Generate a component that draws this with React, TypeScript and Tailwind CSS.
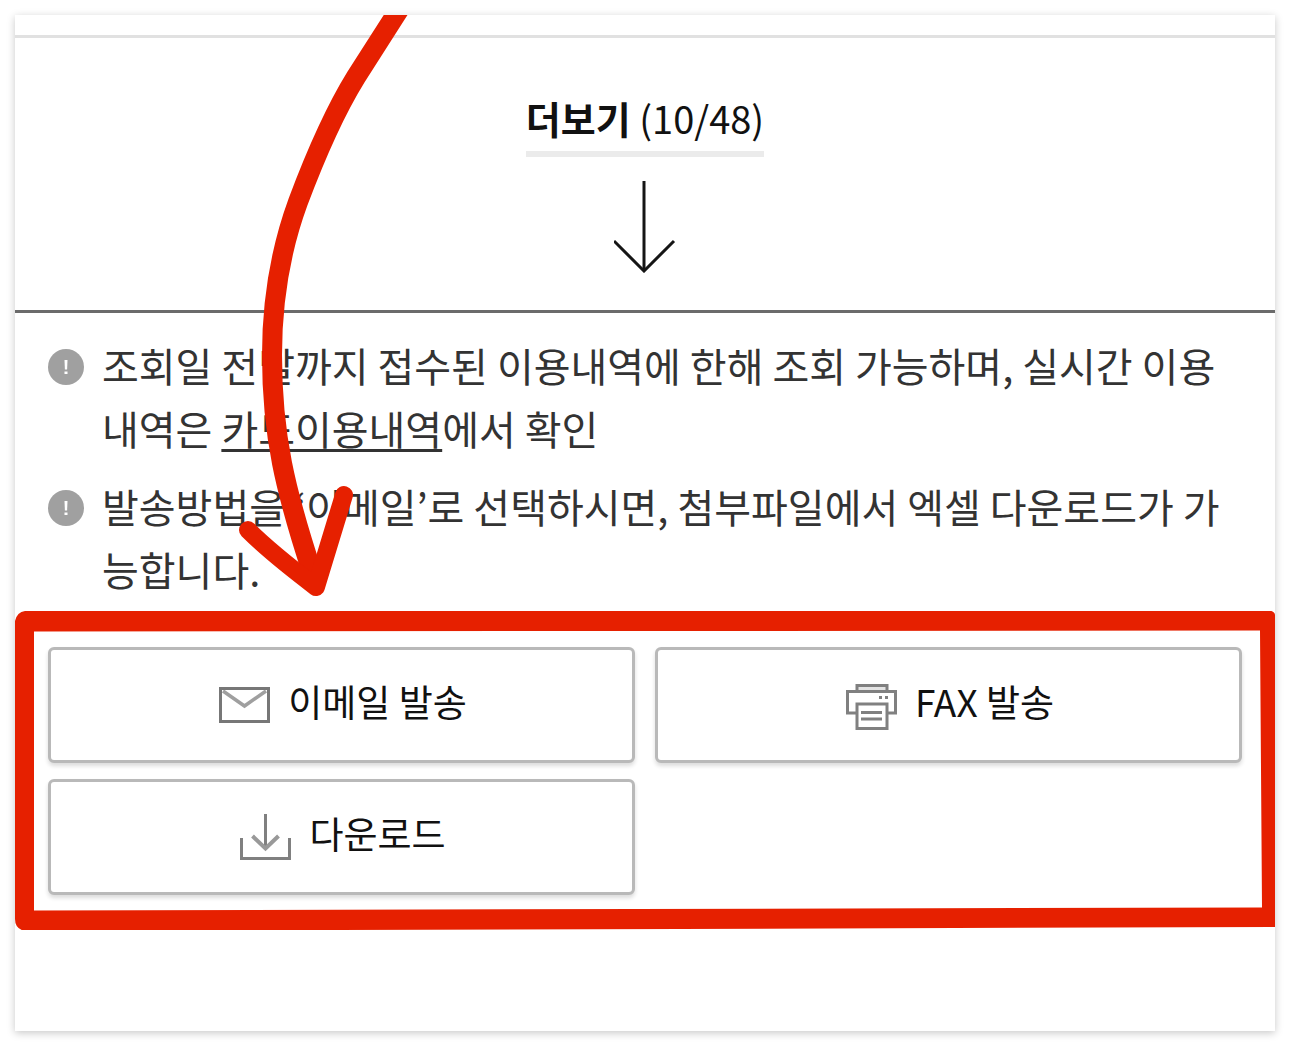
import React from 'react';

const InfoIcon = () => (
  <svg viewBox="0 0 36 36" className="w-9 h-9 mt-[15px] shrink-0" aria-hidden="true">
    <circle cx="18" cy="18" r="18" fill="#a0a0a0" />
    <path d="M16.500 11h3l-.4 9.500h-2.200z" fill="#fff" />
    <rect x="16.500" y="22.500" width="3" height="2.500" fill="#fff" />
  </svg>
);

const MailIcon = () => (
  <svg viewBox="0 0 51 36" className="w-[51px] h-9" fill="none" aria-hidden="true">
    <path d="M4 4l21.500 15L47 4" stroke="#9f9f9f" strokeWidth="3.500" />
    <rect x="1.500" y="1.500" width="48" height="33" stroke="#777" strokeWidth="3" />
  </svg>
);

const PrinterIcon = () => (
  <svg viewBox="0 -4 51 50" className="w-[51px] h-[50px]" fill="none" stroke="#808080" strokeWidth="3" aria-hidden="true">
    <rect x="11" y="1.500" width="30" height="6" fill="#e4e4e4" />
    <rect x="1.500" y="7.500" width="48" height="21.500" fill="#fff" />
    <rect x="11" y="20" width="30" height="24.500" fill="#fff" />
    <path d="M15 28.500h21M15 35h21" />
    <path d="M33 13.500h3M39 13.500h3" />
  </svg>
);

const DownloadIcon = () => (
  <svg viewBox="0 0 51 46" className="w-[51px] h-[46px]" fill="none" strokeWidth="3" aria-hidden="true">
    <path d="M1.500 24v20.500h48V24" stroke="#808080" />
    <path d="M25.500 0v35" stroke="#808080" />
    <path d="M12.500 22l13 12.500 13-12.500" stroke="#999" strokeWidth="4" />
  </svg>
);

interface ActionButtonProps {
  icon: React.ReactNode;
  label: string;
}

const ActionButton: React.FC<ActionButtonProps> = ({ icon, label }) => (
  <button
    type="button"
    className="h-[116px] flex items-center justify-center gap-[18px] pl-[3px] bg-white border-3 border-[#b9b9b9] rounded-md shadow-[0_3px_4px_rgba(0,0,0,0.14)]"
  >
    {icon}
    <span className="text-[37px] leading-[56px] pb-2 text-[#111]">{label}</span>
  </button>
);

const NoteItem: React.FC<{ children: React.ReactNode }> = ({ children }) => (
  <li className="flex gap-[18px]">
    <InfoIcon />
    <p className="flex-1 text-[40px] leading-[63px] text-[#333]">{children}</p>
  </li>
);

const App: React.FC = () => {
  return (
    <div className="p-[15px] bg-white font-['Noto_Sans_CJK_KR',sans-serif]">
      <main className="relative overflow-hidden bg-white pb-[101px] shadow-[0_2px_8px_rgba(0,0,0,0.22)]">
        <div className="h-[23px] border-b-3 border-[#e1e1e1]" />

        {/* Load more */}
        <div className="flex justify-center pt-[51px] pb-[37px] border-b-3 border-[#6b6b6b]">
          <button type="button" className="flex flex-col items-center gap-6 text-[#111]">
            <span className="text-[38px] leading-[58px] pb-1 border-b-6 border-[#ebebeb]">
              <strong className="font-bold">더보기</strong> (10/48)
            </span>
            <svg viewBox="0 0 62 92" className="w-[62px] h-[92px]" fill="none" stroke="#151515" strokeWidth="3" aria-hidden="true">
              <path d="M30 0v90" />
              <path d="M0 60l30 30 30-30" />
            </svg>
          </button>
        </div>

        {/* Notes */}
        <ul className="flex flex-col gap-[15px] pt-[21px] px-[33px]">
          <NoteItem>
            조회일 전달까지 접수된 이용내역에 한해 조회 가능하며, 실시간 이용내역은{' '}
            <a href="#" className="underline decoration-3 underline-offset-4 [text-decoration-skip-ink:none]">카드이용내역</a>에서 확인
          </NoteItem>
          <NoteItem>
            발송방법을 ‘이메일’로 선택하시면, 첨부파일에서 엑셀 다운로드가 가능합니다.
          </NoteItem>
        </ul>

        {/* Send / download */}
        <section className="relative mt-[10px] px-[33px] pt-9 pb-[35px]">
          <div className="grid grid-cols-2 gap-x-5 gap-y-4">
            <ActionButton icon={<MailIcon />} label="이메일 발송" />
            <ActionButton icon={<PrinterIcon />} label="FAX 발송" />
            <ActionButton icon={<DownloadIcon />} label="다운로드" />
          </div>
          <svg
            viewBox="0 0 1260 319"
            preserveAspectRatio="none"
            className="absolute inset-0 w-full h-full pointer-events-none"
            aria-hidden="true"
          >
            <path
              fill="#e62000"
              fillRule="evenodd"
              d="M10 0L1252 -1Q1260 0 1260 4V316H1258L10 320Q0 318 0 308V10Q2 1 10 0ZM19 20.500V299.500L1247 296.500L1245 19.500Z"
            />
          </svg>
        </section>

        {/* Hand-drawn arrow */}
        <svg
          viewBox="0 0 400 600"
          className="absolute top-0 left-0 w-[400px] h-[600px] pointer-events-none"
          fill="none"
          stroke="#e62000"
          strokeLinecap="round"
          strokeLinejoin="round"
          aria-hidden="true"
        >
          <path strokeWidth="20" d="M387 -10L341 62C315 104 295 155 283 187C268 228 257 280 257 340C257 420 270 475 298 560" />
          <path strokeWidth="18" d="M233 515Q255 537 301 572L329 480" />
        </svg>
      </main>
    </div>
  );
};

export default App;
